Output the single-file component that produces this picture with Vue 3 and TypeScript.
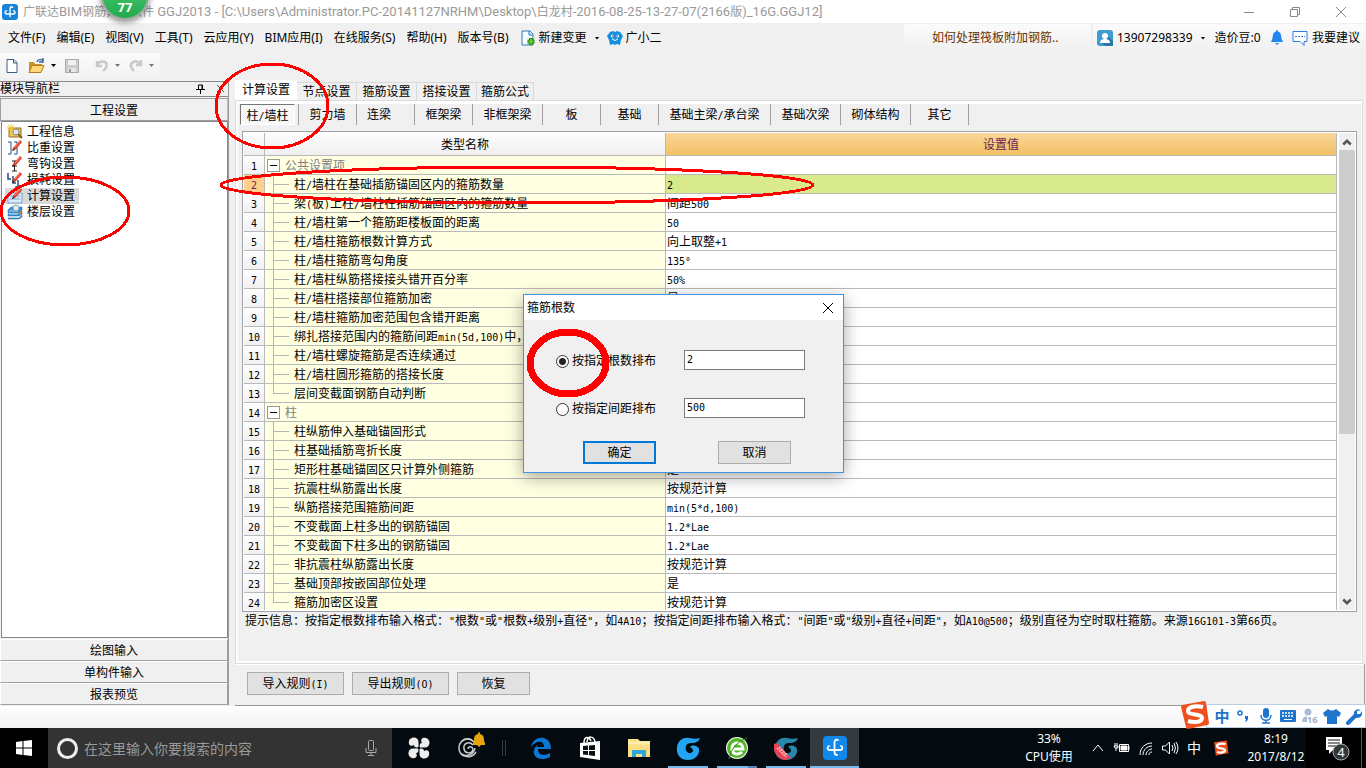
<script setup lang="ts">
import { h, ref } from 'vue'

const MixedText = (props: { t: string; latin?: string }) =>
  props.t
    .split(/([\x20-\x7e°]+)/)
    .filter(Boolean)
    .map((part) => (/^[\x20-\x7e°]/.test(part) ? h('span', { class: props.latin ?? 'half' }, part) : h('span', part)))
MixedText.props = ['t', 'latin']

interface Row {
  name: string
  value?: string
  group?: boolean
  last?: boolean
}

const title =
  '广联达BIM钢筋算量软件 GGJ2013 - [C:\\Users\\Administrator.PC-20141127NRHM\\Desktop\\白龙村-2016-08-25-13-27-07(2166版)_16G.GGJ12]'
const menus = ['文件(F)', '编辑(E)', '视图(V)', '工具(T)', '云应用(Y)', 'BIM应用(I)', '在线服务(S)', '帮助(H)', '版本号(B)']
const navItems = ['工程信息', '比重设置', '弯钩设置', '损耗设置', '计算设置', '楼层设置']
const modules = ['绘图输入', '单构件输入', '报表预览']
const tabs = ['计算设置', '节点设置', '箍筋设置', '搭接设置', '箍筋公式']
const members = [
  { label: '柱/墙柱', size: 'first' },
  { label: '剪力墙', size: 'small' },
  { label: '连梁', size: 'small lead' },
  { label: '框架梁', size: 'small' },
  { label: '非框架梁', size: 'medium' },
  { label: '板', size: 'small' },
  { label: '基础', size: 'small' },
  { label: '基础主梁/承台梁', size: 'large' },
  { label: '基础次梁', size: 'medium' },
  { label: '砌体结构', size: 'medium' },
  { label: '其它', size: 'small' },
]
const rows: Row[] = [
  { name: '公共设置项', group: true },
  { name: '柱/墙柱在基础插筋锚固区内的箍筋数量', value: '2' },
  { name: '梁(板)上柱/墙柱在插筋锚固区内的箍筋数量', value: '间距500' },
  { name: '柱/墙柱第一个箍筋距楼板面的距离', value: '50' },
  { name: '柱/墙柱箍筋根数计算方式', value: '向上取整+1' },
  { name: '柱/墙柱箍筋弯勾角度', value: '135°' },
  { name: '柱/墙柱纵筋搭接接头错开百分率', value: '50%' },
  { name: '柱/墙柱搭接部位箍筋加密', value: '是' },
  { name: '柱/墙柱箍筋加密范围包含错开距离' },
  { name: '绑扎搭接范围内的箍筋间距min(5d,100)中，' },
  { name: '柱/墙柱螺旋箍筋是否连续通过' },
  { name: '柱/墙柱圆形箍筋的搭接长度' },
  { name: '层间变截面钢筋自动判断', last: true },
  { name: '柱', group: true },
  { name: '柱纵筋伸入基础锚固形式' },
  { name: '柱基础插筋弯折长度' },
  { name: '矩形柱基础锚固区只计算外侧箍筋', value: '是' },
  { name: '抗震柱纵筋露出长度', value: '按规范计算' },
  { name: '纵筋搭接范围箍筋间距', value: 'min(5*d,100)' },
  { name: '不变截面上柱多出的钢筋锚固', value: '1.2*Lae' },
  { name: '不变截面下柱多出的钢筋锚固', value: '1.2*Lae' },
  { name: '非抗震柱纵筋露出长度', value: '按规范计算' },
  { name: '基础顶部按嵌固部位处理', value: '是' },
  { name: '箍筋加密区设置', value: '按规范计算', last: true },
]
const hint =
  '提示信息：按指定根数排布输入格式："根数"或"根数+级别+直径"，如4A10；按指定间距排布输入格式："间距"或"级别+直径+间距"，如A10@500；级别直径为空时取柱箍筋。来源16G101-3第66页。'

const mode = ref('count')
const count = ref('2')
const spacing = ref('500')
const query = ref('')
</script>

<template>
  <div class="desktop">
    <header class="title-bar">
      <svg class="app-icon" viewBox="0 0 24 24"><rect width="24" height="24" rx="5" fill="#1684d8" /><path d="M16 5c-3-2-4 0-4 3v11M7 10c-4 1-3 5 0 5h10c3 0 4-4 0-5" fill="none" stroke="#fff" stroke-width="2" stroke-linecap="round" /></svg>
      <span class="title-text"><MixedText :t="title" latin="title-latin" /></span>
      <div class="window-buttons">
        <button aria-label="最小化"><svg viewBox="0 0 12 12"><path d="M1 6.500h10" /></svg></button>
        <button aria-label="还原"><svg viewBox="0 0 12 12"><path d="M1.500 3.500h7v7h-7zM3.500 3.500v-2h7v7h-2" /></svg></button>
        <button aria-label="关闭"><svg viewBox="0 0 12 12"><path d="M1 1l10 10M11 1L1 11" /></svg></button>
      </div>
      <div class="speed-ball">77</div>
    </header>

    <nav class="menu-bar">
      <button v-for="m in menus" :key="m" class="menu">{{ m }}</button>
      <button class="menu with-icon">
        <svg class="i16" viewBox="0 0 16 16"><path d="M2 1h8l3 3v11H2z" fill="#f4faff" stroke="#2b7fb8" /><path d="M9 1v4h4" fill="#cde6f7" stroke="#2b7fb8" /><path d="M11 8v7M7.500 11.500h7" stroke="#2f8a12" stroke-width="4" /><path d="M11 9v5M8.500 11.500h5" stroke="#66c832" stroke-width="2" /></svg>
        新建变更<i class="caret wide"></i>
      </button>
      <button class="menu with-icon helper">
        <svg class="i16" viewBox="0 0 16 16"><path d="M3 2l3-1 2 1 2-1 3 1 3 4-2 4-1 5-3-1-2 1-2-1-3 1-1-5-2-4z" fill="#168fe0" /><circle cx="5.500" cy="6" r="1.600" fill="#fff" /><circle cx="10.500" cy="6" r="1.600" fill="#fff" /><circle cx="6" cy="6" r="0.800" fill="#124" /><circle cx="10" cy="6" r="0.800" fill="#124" /><path d="M5 9q3 3 6 0" stroke="#fff" fill="none" /></svg>
        广小二
      </button>
      <a class="tip" href="#">如何处理筏板附加钢筋..</a>
      <div class="account">
        <svg class="i16" viewBox="0 0 16 16"><rect width="16" height="16" rx="3" fill="#3f9bd0" /><path d="M9 5l7 6v5H8l-4-4z" fill="#2878a8" /><circle cx="8" cy="6" r="3" fill="#fff" /><path d="M3 13c0-3 2-4 5-4s5 1 5 4z" fill="#fff" /></svg>
        <button class="phone">13907298339<i class="caret wide"></i></button>
        <span class="beans">造价豆:0</span>
        <svg class="i16 bell" viewBox="0 0 16 16"><path d="M8 0q1 0 1 1.500c3 1 3 3 3.500 7L14 12H2l1.500-3.500C4 4.500 4 2.500 7 1.500Q7 0 8 0zM6 13h4l-2 2z" fill="#1f86f2" /></svg>
        <button class="advice"><svg class="i16" viewBox="0 0 16 16"><path d="M1 1.500h14v10h-3v4l-4-4H1z" fill="#fff" stroke="#2c7de0" /><path d="M3 6.500h10" stroke="#2c7de0" stroke-dasharray="2 1" /></svg>我要建议</button>
      </div>
    </nav>

    <div class="tool-row">
      <div class="tool-bar">
        <button aria-label="新建"><svg class="i16" viewBox="0 0 16 16"><path d="M3 1.500h7l3 3v10H3z" fill="#fff" stroke="#415d7c" /><path d="M9.500 1.500v3.500h3.500" fill="#cfdef0" stroke="#415d7c" /></svg></button>
        <button class="drop" aria-label="打开"><svg class="i18" viewBox="0 0 18 16"><path d="M1 14V4h5l1 2h7v8z" fill="#c89328" /><path d="M1 14.500l3-7h12l-3 7z" fill="#ffd877" stroke="#b57c19" /><path d="M9 4c1-3 4-3 6-1M15 0v4h-4" fill="none" stroke="#386d9c" stroke-width="1.500" /></svg><i class="caret"></i></button>
        <button aria-label="保存"><svg class="i16" viewBox="0 0 16 16"><path d="M1.500 1.500h13v13h-13z" fill="#ccc" stroke="#aaa" /><path d="M4 2h8v5H4z" fill="#eee" /><path d="M4 10h8v4H4z" fill="#e8e8e8" /><path d="M5 11h2v3H5z" fill="#999" /></svg></button>
        <span class="tool-line"></span>
        <button class="drop dim" aria-label="撤销"><svg class="i16" viewBox="0 0 16 16"><path d="M3 3v5h5M3 7c2-3 5-4 8-3 3 2 2 6-2 9" fill="none" stroke="#c9c9c9" stroke-width="2.500" /></svg><i class="caret"></i></button>
        <button class="drop dim" aria-label="重做"><svg class="i16" viewBox="0 0 16 16"><path d="M13 2v5H8M12 6C10 3 7 3 5 4c-3 2-3 6 1 9" fill="none" stroke="#c9c9c9" stroke-width="2.500" /></svg><i class="caret"></i></button>
      </div>
    </div>

    <main class="work">
      <aside class="side">
        <div class="side-title">
          <span>模块导航栏</span>
          <button aria-label="固定"><svg viewBox="0 0 10 10"><path d="M2.500 5.500V1h4v4.500M6 1v5M0 5.500h9M4.500 6v4" fill="none" stroke="#000" /></svg></button>
          <button aria-label="关闭"><svg viewBox="0 0 10 10"><path d="M1 1l7 7M8 1L1 8" stroke="#555" /></svg></button>
        </div>
        <button class="module">工程设置</button>
        <ul class="nav-list">
          <li v-for="(n, i) in navItems" :key="n">
            <button :class="{ selected: i === 4 }">
              <svg class="i16" viewBox="0 0 16 16">
                <template v-if="i === 0"><path d="M2 4h12v9H2z" fill="#eec45c" stroke="#94701f" /><path d="M4 0v8M0 4h8M1 1l6 6M7 1L1 7" stroke="#f2c22c" /><path d="M11 10l4 4" stroke="#8b5a22" stroke-width="2" /><circle cx="9" cy="8" r="3" fill="#dcecf5" stroke="#888" /></template>
                <template v-else-if="i === 5"><path d="M1 6l3-3h11v3l-3 3H1zM1 10h11l3-3v3l-3 2H1zM1 14h11l3-3v2l-3 2H1z" fill="#3a8dd0" stroke="#1c60a0" stroke-width="0.500" /><path d="M2 7h9M2 10h9M2 13h9" stroke="#b5dcf5" /><circle cx="9" cy="4" r="3" fill="#dceefa" stroke="#8ba0b0" /><path d="M12 7l3 3" stroke="#b97b33" stroke-width="2" /></template>
                <template v-else>
                  <path v-if="i === 1" d="M1 2h3v12H1M7 2h3v12H7" fill="none" stroke="#274f85" />
                  <path v-if="i === 2" d="M5 5h5M7.500 5v10M5 10h5M5 15h5" fill="none" stroke="#222" />
                  <path v-if="i === 3" d="M1 1v6h3M6 4v7h3M11 8v7h-3" fill="none" stroke="#274f85" stroke-width="1.500" />
                  <path v-if="i === 4" d="M1 5h14v10H1zM3 8h10M3 11h10" fill="#dceafa" stroke="#7ba4d2" />
                  <path d="M7 9l7-8" stroke="#df422d" stroke-width="3" /><path d="M8 7l5-6" stroke="#ff9c82" /><path d="M5 11l1-3 2 2z" fill="#3f2418" />
                </template>
              </svg>
              <span>{{ n }}</span>
            </button>
          </li>
        </ul>
        <button v-for="m in modules" :key="m" class="module">{{ m }}</button>
      </aside>

      <section class="content">
        <div class="tabs">
          <button v-for="(t, i) in tabs" :key="t" :class="{ active: i === 0 }">{{ t }}</button>
        </div>
        <div class="pane">
          <div class="members">
            <div v-for="(m, i) in members" :key="m.label" class="member" :class="m.size">
              <button :class="{ pressed: i === 0 }"><MixedText :t="m.label" /></button>
            </div>
          </div>
          <div class="grid-box">
            <div class="grid-view">
              <table>
                <colgroup><col class="c-num" /><col class="c-name" /><col /></colgroup>
                <thead><tr><th></th><th>类型名称</th><th class="hot">设置值</th></tr></thead>
                <tbody>
                  <tr v-for="(r, i) in rows" :key="i" :class="{ current: i === 1 }">
                    <td class="num"><MixedText :t="String(i + 1)" /></td>
                    <td class="name" :class="{ group: r.group, leaf: !r.group, last: r.last }">
                      <div class="cell"><button v-if="r.group" class="fold" aria-label="折叠"></button><span><MixedText :t="r.name" /></span></div>
                    </td>
                    <td class="value"><MixedText :t="r.value ?? ''" /></td>
                  </tr>
                </tbody>
              </table>
            </div>
            <div class="scroll-bar">
              <button aria-label="向上"><svg viewBox="0 0 8 6"><path d="M1 5l3-3 3 3" /></svg></button>
              <div class="track"><div class="thumb"></div></div>
              <button aria-label="向下"><svg viewBox="0 0 8 6"><path d="M1 1l3 3 3-3" /></svg></button>
            </div>
          </div>
          <p class="hint"><MixedText :t="hint" /></p>
        </div>
        <div class="actions">
          <button class="push"><MixedText t="导入规则(I)" /></button>
          <button class="push"><MixedText t="导出规则(O)" /></button>
          <button class="push short">恢复</button>
        </div>
      </section>
    </main>

    <div class="status">
      <div class="ime">
        <svg class="sogou" viewBox="0 0 28 28"><path d="M1 4l22-4q2 0 2 2l3 20q0 2-2 2L7 28q-2 0-2-2L0 6q0-2 1-2z" fill="#f0501e" /><path d="M22 6C14 4 7 6 7 10c0 5 14 2 14 7 0 4-7 5-14 3" fill="none" stroke="#fff" stroke-width="4" /></svg>
        <span class="zh">中</span>
        <svg viewBox="0 0 18 18"><circle cx="5" cy="6" r="2" fill="none" stroke="#1f74cd" stroke-width="1.500" /><path d="M10 9h3v3q0 2-3 3l1-3h-1z" fill="#1f74cd" /></svg>
        <svg viewBox="0 0 18 18"><rect x="6" y="1" width="6" height="10" rx="3" fill="#1f74cd" /><path d="M4 8c0 7 10 7 10 0M9 13v3M5 16h8" fill="none" stroke="#1f74cd" stroke-width="1.500" /></svg>
        <svg viewBox="0 0 18 18"><rect x="1" y="3" width="16" height="12" rx="1" fill="#1f74cd" /><path d="M3 6h12M3 9h12" stroke="#fff" stroke-width="1.500" stroke-dasharray="2 1" /><path d="M5 12.500h8" stroke="#fff" /></svg>
        <svg viewBox="0 0 18 18"><circle cx="7" cy="5" r="3.500" fill="#aebbd4" /><path d="M1 15q0-6 6-6 4 0 5 3v3z" fill="#aebbd4" /><rect x="6" y="9" width="12" height="8" fill="#fff" /><text x="6" y="16" font-size="9" font-weight="700" fill="#9eadc9">16</text></svg>
        <svg viewBox="0 0 18 18"><path d="M5 2q4 3 8 0l5 4-2 4-2-1v8H4V9l-2 1-2-4z" fill="#1f74cd" /></svg>
        <svg viewBox="0 0 18 18"><path d="M3 16l7-7" stroke="#1f74cd" stroke-width="4" stroke-linecap="round" /><path d="M16 3l-4 1v3h3l2-3q1 7-5 7-4-1-3-6 2-4 7-2z" fill="#1f74cd" /></svg>
      </div>
    </div>

    <footer class="task-bar">
      <button class="start" aria-label="开始"><svg viewBox="0 0 16 16"><path d="M0 2l6.500-1v6.500H0zM7.500 1L16 0v7.500H7.500zM0 8.500h6.500V15L0 14zM7.500 8.500H16V16l-8.500-1z" fill="#fff" /></svg></button>
      <div class="search">
        <i class="ring"></i>
        <input v-model="query" type="text" placeholder="在这里输入你要搜索的内容" aria-label="搜索" />
        <svg viewBox="0 0 12 18"><rect x="3.500" y="1.500" width="5" height="10" rx="1" /><path d="M1 9v4.500h10V9M6 14v3M3 16.500h6" /></svg>
      </div>
      <div class="apps">
        <button aria-label="应用"><svg viewBox="0 0 24 24"><g fill="#eee"><path d="M11.500 11V7C12 0 3 0 2 5c-1 4 2 6 5 4 0 2 2 3 4.500 2z" /><path d="M13 11.500h4c7 .5 7-8.500 2-9.500-4-1-6 2-4 5-2 0-3 2-2 4.500z" /><path d="M12.500 13v4c-.5 7 8.500 7 9.500 2 1-4-2-6-5-4 0-2-2-3-4.500-2z" /><path d="M11 12.500H7c-7-.5-7 8.500-2 9.500 4 1 6-2 4-5 2 0 3-2 2-4.500z" /></g></svg></button>
        <button class="alert" aria-label="通知应用"><svg viewBox="0 0 28 28"><g fill="none" stroke="#ccc" stroke-width="1.500"><path d="M17 10C11 4 2 8 2 16c0 9 12 12 17 4" /><path d="M16 13c-4-4-10-2-9 4 1 5 8 5 9 1 0-4-5-4-5-1" /><path d="M5 9c3-3 8-3 11 0M5 22c4 3 12 1 13-6" /></g><path d="M22 0q1 0 1 2c4 1 4 4 4 7l1 2v2H16v-2l1-2c0-3 0-6 4-7q0-2 1-2zM20 13h4l-2 2z" fill="#e6a50c" /></svg></button>
        <span class="divider"></span>
        <button aria-label="浏览器"><svg viewBox="0 0 24 24"><path d="M2 11C4 2 11 1 15 2c6 2 7 7 7 11H9c0 7 7 7 12 4v4C11 26 3 21 5 14c1-3 2-4 4-5-1 1-1 2-1 2h7c0-8-9-6-13 0z" fill="#0a77d5" /></svg></button>
        <button aria-label="商店"><svg viewBox="0 0 24 24"><path d="M2 7l20-2v19L2 21z" fill="#fff" /><path d="M6 7c0-7 5-7 7-2M9 6c1-7 7-6 8 0" fill="none" stroke="#fff" stroke-width="1.500" /><path d="M5 10l5-.5V14H5zM11 9.500l6-.5v5h-6zM5 15h5v4l-5-.500zM11 15h6v5l-6-.8z" fill="#0a1114" /></svg></button>
        <button aria-label="文件夹"><svg viewBox="0 0 24 24"><path d="M1 3h10l2 2h10v16H1z" fill="#f9df80" /><path d="M1 7h22" stroke="#ffeeb2" stroke-width="3" /><path d="M5 21v-7h14v7h-4v-3H9v3z" fill="#2ea7df" /></svg></button>
        <button class="open" aria-label="广联达云"><svg viewBox="0 0 24 24"><path d="M24 2c-2 5-6 5-10 5-4 1-5 4-4 7 1 4 6 4 7 1 0-2-1-3-3-4 3-3 8-1 9 2 1 6-4 11-11 11C4 24 0 18 1 11 2 4 8 1 13 2c4 1 8 1 11 0z" fill="#24a3f1" /></svg></button>
        <button class="open multi" aria-label="浏览器二"><svg viewBox="0 0 24 24"><circle cx="12" cy="12" r="11" fill="#edf7e8" /><circle cx="12" cy="12" r="10" fill="#55b62a" /><path d="M7 13h11c0-8-12-8-11 0 0 6 7 6 10 3" fill="none" stroke="#fff" stroke-width="3" /><path d="M22 2Q7 7 4 23" fill="none" stroke="#328a17" /></svg></button>
        <button class="open" aria-label="广联达算量"><svg viewBox="0 0 24 24"><path d="M24 2c-2 5-6 5-10 5-4 1-5 4-4 7 1 4 6 4 7 1 0-2-1-3-3-4 3-3 8-1 9 2 1 6-4 11-11 11C4 24 0 18 1 11 2 4 8 1 13 2c4 1 8 1 11 0z" fill="#2788ab" /><path d="M0 8l3-1 14 15-5 2C6 24 2 20 0 14z" fill="#e94455" /><path d="M3 12l9 9M5 11l8 8" stroke="#ffc0c4" stroke-dasharray="2 1" stroke-width="1.500" /></svg></button>
        <button class="open active" aria-label="广联达BIM"><svg viewBox="0 0 24 24"><rect width="24" height="24" rx="4" fill="#1188ec" /><path d="M15 4c-3-1-3.500 1-3.500 3v9c0 2 .5 3 2.500 3M6 10c-2 1-2 4 1 4h10c3 0 3-3 1-4" fill="none" stroke="#fff" stroke-width="1.800" stroke-linecap="round" /></svg></button>
      </div>
      <div class="cpu"><span>33%</span><span>CPU使用</span></div>
      <div class="tray">
        <svg viewBox="0 0 18 18"><path d="M4 12l5-6 5 6" /></svg>
        <svg viewBox="0 0 18 18"><path d="M6.500 5.500h9v7h-9zM16 7.500v3M2 4v3M4 4v3M1 7h4v2H2zM3 9v3" /><path d="M8 7h6v4H8z" fill="#fff" /></svg>
        <svg viewBox="0 0 18 18"><path d="M3 16C3 9 8 4 15 4M6 16c0-5 4-9 9-9M9 16c0-3 3-6 6-6M12 16c0-2 1-3 3-3" /></svg>
        <svg viewBox="0 0 18 18"><path d="M1.500 7h3l4-4v12l-4-4h-3zM11 6q2 3 0 6M13 4q3 5 0 10M15 3q4 6 0 12" /></svg>
        <span>中</span>
        <svg viewBox="0 0 28 28" class="tray-s"><path d="M2 4l22-3 3 22-22 4z" fill="#f0501e" stroke="none" /><path d="M22 7C14 5 7 7 7 11c0 5 14 2 14 7 0 4-7 5-14 3" stroke-width="4" /></svg>
      </div>
      <div class="clock"><span>8:19</span><span>2017/8/12</span></div>
      <button class="notice" aria-label="操作中心"><svg viewBox="0 0 26 26"><path d="M1 2h16v13H8l-4 4v-4H1z" fill="#fff" /><path d="M3 5h12M3 8h12M3 11h9" stroke="#111" /><circle cx="16" cy="17" r="8" fill="#30363a" stroke="#aaa" /><text x="16" y="22" text-anchor="middle" font-size="13" fill="#fff">4</text></svg></button>
      <span class="peek"></span>
    </footer>

    <form class="dialog" role="dialog" aria-label="箍筋根数" @submit.prevent>
      <div class="dialog-title"><span>箍筋根数</span><button type="button" aria-label="关闭"><svg viewBox="0 0 12 12"><path d="M1 1l10 10M11 1L1 11" /></svg></button></div>
      <div class="dialog-body">
        <div class="option">
          <label><input v-model="mode" type="radio" value="count" />按指定根数排布</label>
          <input v-model="count" type="text" aria-label="根数" />
        </div>
        <div class="option">
          <label><input v-model="mode" type="radio" value="spacing" />按指定间距排布</label>
          <input v-model="spacing" type="text" aria-label="间距" />
        </div>
        <div class="dialog-buttons">
          <button class="push short default" type="submit">确定</button>
          <button class="push short" type="button">取消</button>
        </div>
      </div>
    </form>

    <svg class="marks" width="860" height="420" viewBox="0 0 860 420">
      <g fill="none" stroke="#f00" stroke-width="3" shape-rendering="crispEdges">
        <ellipse cx="272" cy="106" rx="56" ry="42" />
        <ellipse cx="65" cy="211" rx="64" ry="34" />
        <ellipse cx="517" cy="185" rx="296" ry="18" />
        <ellipse cx="568" cy="363" rx="38" ry="31" stroke-width="7" />
      </g>
    </svg>
  </div>
</template>

<style>
body { margin: 0; overflow: hidden; }
.half { font-family: "DejaVu Sans Mono", monospace; font-size: 10px; line-height: 10px; white-space: pre; }
.title-latin { font-family: Roboto, sans-serif; font-size: 13px; white-space: pre; }
</style>

<style scoped>
* { box-sizing: border-box; }
.desktop {
  position: relative;
  display: flex;
  flex-direction: column;
  height: 100vh;
  overflow: hidden;
  background: #f0f0f0;
  color: #000;
  font: 12px/16px "Noto Sans", "Noto Sans CJK SC", sans-serif;
}
button { margin: 0; padding: 0; border: 0; background: none; color: inherit; font: inherit; white-space: nowrap; }
svg { display: block; flex: none; }
.i16 { width: 16px; height: 16px; }
.i18 { width: 18px; height: 16px; }
.caret { width: 5px; height: 3px; background: currentColor; clip-path: polygon(0 0, 100% 0, 50% 100%); flex: none; }

.title-bar { position: relative; flex: none; display: flex; align-items: center; height: 23px; padding-left: 2px; background: #fff; color: #999; }
.app-icon { width: 16px; height: 16px; margin-right: 5px; }
.title-text { flex: 1; white-space: nowrap; overflow: hidden; line-height: 18px; }
.window-buttons { display: flex; padding-right: 2px; }
.window-buttons button { display: grid; place-items: center; width: 46px; height: 20px; }
.window-buttons svg { width: 12px; height: 12px; fill: none; stroke: #888; }
.speed-ball {
  position: absolute; left: 101px; top: -28px; width: 48px; height: 48px; padding-top: 25px; z-index: 2;
  border: 2px solid #9aa89d; border-radius: 50%; background: linear-gradient(#4fd37a, #21a94c);
  color: #fff; text-align: center; font-size: 13px; font-weight: 700; box-shadow: 0 2px 6px rgba(0, 0, 0, .5);
}

.menu-bar { flex: none; display: flex; align-items: center; height: 30px; padding-left: 8px; }
.menu { margin-right: 11px; }
.with-icon { display: flex; align-items: center; gap: 3px; margin-right: 7px; }
.menu .wide, .phone .wide { margin-left: 5px; }
.tip { margin-left: auto; width: 187px; height: 28px; padding-left: 28px; line-height: 28px; border-radius: 3px; background: linear-gradient(#fbfbfb, #f0f0f0); color: #663300; text-decoration: none; }
.account { display: flex; align-items: center; width: 273px; height: 28px; margin-left: 2px; padding: 0 6px 0 4px; border-radius: 3px; background: linear-gradient(#fbfbfb, #f0f0f0); white-space: nowrap; }
.phone { display: flex; align-items: center; margin-left: 4px; gap: 3px; }
.beans { margin-left: 9px; }
.bell { margin-left: 8px; }
.advice { display: flex; align-items: center; gap: 4px; margin-left: auto; }

.tool-row { flex: none; height: 27px; }
.tool-bar { display: flex; align-items: center; width: 160px; height: 25px; padding-left: 4px; background: linear-gradient(#fafafa, #f2f2f2); }
.tool-bar button { margin-right: 8px; }
.drop { display: flex; align-items: center; gap: 5px; }
.dim .caret { color: #777; }
.tool-line { width: 1px; height: 22px; margin-right: 6px; background: #999; }

.work { flex: 1; display: flex; gap: 6px; min-height: 0; }
.side { flex: none; display: flex; flex-direction: column; width: 229px; margin-bottom: 1px; border-right: 1px solid #999; }
.side-title { display: flex; align-items: center; gap: 8px; height: 16px; margin: 1px 0 1px; border: solid #888; border-width: 1px 0; }
.side-title span { flex: 1; }
.side-title button { width: 12px; }
.side-title svg { width: 10px; height: 10px; }
.module { flex: none; height: 22px; padding-top: 1px; border: 1px solid #a0a0a0; border-top-color: #fff; border-left-color: #fff; line-height: 19px; }
.side-title + .module { height: 23px; border-color: #a0a0a0; border-right-color: #bbb; }
.nav-list { flex: 1; margin: 0 0 1px 1px; padding: 2px 0 0 3px; border: 1px solid #828790; background: #fff; list-style: none; }
.nav-list li { height: 16px; }
.nav-list button { display: flex; align-items: center; gap: 4px; height: 16px; padding: 0 4px 0 2px; }
.nav-list .selected { background: #d9d9d9; }

.content { flex: 1; display: flex; flex-direction: column; min-width: 0; }
.tabs { flex: none; display: flex; align-items: flex-end; height: 20px; }
.tabs button { width: 60px; height: 18px; border: 1px solid #d9d9d9; border-width: 1px 1px 0 0; line-height: 18px; }
.tabs .active { width: 62px; height: 20px; border: 0; background: #fff; line-height: 20px; }
.tabs button:last-child { width: 57px; }
.pane { flex: 1; display: flex; flex-direction: column; min-height: 0; margin-right: 3px; padding: 0 4px; border: 1px solid #dcdcdc; box-shadow: inset 0 3px #fff, inset 2px 0 #fff, inset -1px 0 #fff, inset 0 -2px #fff; }
.members { flex: none; display: flex; height: 30px; padding-top: 3px; }
.member { height: 21px; border-right: 1px solid #a0a0a0; }
.member button { width: 100%; height: 21px; line-height: 21px; }
.first { width: 59px; }
.small { width: 58px; }
.medium { width: 70px; }
.large { width: 112px; }
.lead button { padding-right: 13px; }
.member .pressed { width: 55px; border: 1px solid; border-color: #777 #fff #fff #777; background: repeating-conic-gradient(#fff 0 25%, #f0f0f0 0 50%) 0 0 / 2px 2px; }
.grid-box { flex: 1; display: flex; min-height: 0; margin: 0 1px 0 2px; padding: 1px; gap: 2px; border: 1px solid #a0a0aa; background: #fff; }
.grid-view { flex: 1; min-width: 0; overflow: hidden; }
table { width: 100%; table-layout: fixed; border-collapse: separate; border-spacing: 0; line-height: 16px; }
.c-num { width: 21px; }
.c-name { width: 401px; }
th, td { height: 19px; padding: 2px 0 0; border: solid #b9b9b9; border-width: 0 1px 1px 0; white-space: nowrap; overflow: hidden; }
th { height: 23px; background: linear-gradient(#fdfdfd, #efefef); font-weight: 400; }
.hot { background: linear-gradient(#f9d69b, #f3c164); color: #6b1d4d; }
.num { text-align: center; background: linear-gradient(#fdfdfd, #f1f1f1); }
.name { padding: 0; background: #ffffe1; }
.value { padding-left: 1px; background: #fff; }
.current .num { background: #fdcf8a; color: #70204c; }
.current .value { background: #d9ea8c; }
.cell { position: relative; height: 18px; padding-left: 29px; line-height: 20px; }
.group .cell { padding-left: 20px; color: #808080; }
.leaf .cell::before, .leaf .cell::after { content: ""; position: absolute; left: 8px; top: 0; background: #b5b5b5; }
.leaf .cell::before { width: 1px; height: 18px; }
.leaf .cell::after { top: 9px; width: 16px; height: 1px; }
.last .cell::before { height: 9px; }
.fold { position: absolute; left: 2px; top: 3px; width: 13px; height: 13px; border: 1px solid #999; background: linear-gradient(#000, #000) center / 7px 1px no-repeat #fff; }
.scroll-bar { flex: none; display: flex; flex-direction: column; width: 16px; background: #f0f0f0; }
.scroll-bar button { display: grid; place-items: center; height: 17px; }
.scroll-bar svg { width: 10px; height: 8px; fill: none; stroke: #555; stroke-width: 2; }
.track { flex: 1; }
.thumb { height: 64%; background: #cdcdcd; }
.hint { flex: none; height: 51px; margin: 0; padding: 1px 0 0 5px; white-space: nowrap; }
.actions { flex: none; display: flex; gap: 8px; height: 42px; margin-right: 1px; padding: 8px 12px; border-bottom: 1px solid #999; border-right: 1px solid #999; box-shadow: inset 0 1px #fff; }
.push { width: 97px; height: 23px; border: 1px solid #adadad; background: #e1e1e1; line-height: 20px; }
.short { width: 73px; }

.status { position: relative; flex: none; height: 22px; background: linear-gradient(#fff, #f1f1f1); }
.ime { position: absolute; right: 0; bottom: 0; display: flex; align-items: center; gap: 4px; height: 24px; padding: 0 2px 0 6px; border: 1px solid #b9d0e4; background: #fff; }
.ime svg { width: 18px; height: 18px; }
.ime .sogou { position: absolute; left: -26px; top: -4px; width: 28px; height: 28px; }
.zh { width: 18px; color: #1f74cd; font-size: 15px; font-weight: 700; text-align: center; }

.task-bar { flex: none; display: flex; height: 40px; background: #030b10; color: #fff; }
.start { display: grid; place-items: center; width: 48px; background: #000; }
.start svg { width: 16px; height: 16px; }
.search { flex: none; display: flex; align-items: center; width: 344px; padding: 0 15px 0 9px; background: #333; }
.ring { flex: none; width: 21px; height: 21px; border: 3px solid #eee; border-radius: 50%; }
.search input { flex: 1; min-width: 0; padding: 0 0 0 6px; border: 0; outline: 0; background: none; color: #fff; font: 14px/20px "Noto Sans CJK SC", sans-serif; }
.search input::placeholder { color: #999; opacity: 1; }
.search svg { width: 12px; height: 18px; fill: none; stroke: #aaa; }
.apps { display: flex; margin-left: 2px; }
.apps button { position: relative; display: grid; place-items: center; width: 49px; }
.apps svg { width: 24px; height: 24px; }
.apps .alert { padding: 0 0 4px 6px; }
.apps .alert svg { width: 28px; height: 28px; }
.divider { width: 4px; height: 16px; margin: 12px 10px; border: solid #333b40; border-width: 0 1px; }
.open::after { content: ""; position: absolute; left: 5px; right: 4px; bottom: 0; height: 2px; background: #76b9ed; }
.multi::after { background: linear-gradient(90deg, #76b9ed 31px, #5784ad 31px); }
.apps .active { background: #333b3f; }
.active::after { left: 0; right: 0; }
.cpu, .clock { display: flex; flex-direction: column; text-align: center; line-height: 18px; padding-top: 2px; white-space: nowrap; }
.cpu { width: 60px; margin-left: auto; }
.tray { display: flex; align-items: center; gap: 6px; margin: 0 17px 0 10px; }
.tray svg { width: 18px; height: 18px; fill: none; stroke: #fff; }
.tray span { width: 18px; font-size: 14px; text-align: center; }
.tray .tray-s { width: 16px; height: 16px; margin-left: 4px; }
.clock { width: 60px; }
.notice { display: grid; place-items: center; width: 55px; padding-left: 8px; background: #000; }
.notice svg { width: 26px; height: 26px; }
.peek { width: 5px; border-left: 1px solid #555; background: #000; }

.dialog { position: absolute; left: 523px; top: 294px; width: 321px; border: 1px solid #3f94e6; background: #f0f0f0; box-shadow: 0 4px 16px rgba(0, 0, 0, .35); }
.dialog-title { display: flex; justify-content: space-between; align-items: center; height: 25px; padding: 0 9px 0 3px; background: #fff; }
.dialog-title svg { width: 12px; height: 12px; stroke: #000; }
.dialog-body { display: flex; flex-direction: column; gap: 28px; padding: 30px 38px 8px 32px; }
.option { display: flex; justify-content: space-between; height: 20px; }
.option label { display: flex; align-items: center; gap: 3px; padding-top: 2px; }
.option input[type="text"] { width: 121px; height: 20px; padding: 0 2px 2px; border: 1px solid #7a7a7a; border-radius: 0; background: #fff; outline: 0; font: 10px/14px "DejaVu Sans Mono", monospace; }
.option input[type="radio"] { appearance: none; width: 13px; height: 13px; margin: 0; border: 1px solid #333; border-radius: 50%; background: #fff; }
.option input[type="radio"]:checked { background: radial-gradient(circle, #222 3px, #fff 4px); }
.dialog-buttons { display: flex; gap: 62px; padding-left: 27px; margin-top: -5px; }
.default { border: 2px solid #0078d7; line-height: 18px; }
.marks { position: absolute; left: 0; top: 0; z-index: 3; pointer-events: none; }
</style>
